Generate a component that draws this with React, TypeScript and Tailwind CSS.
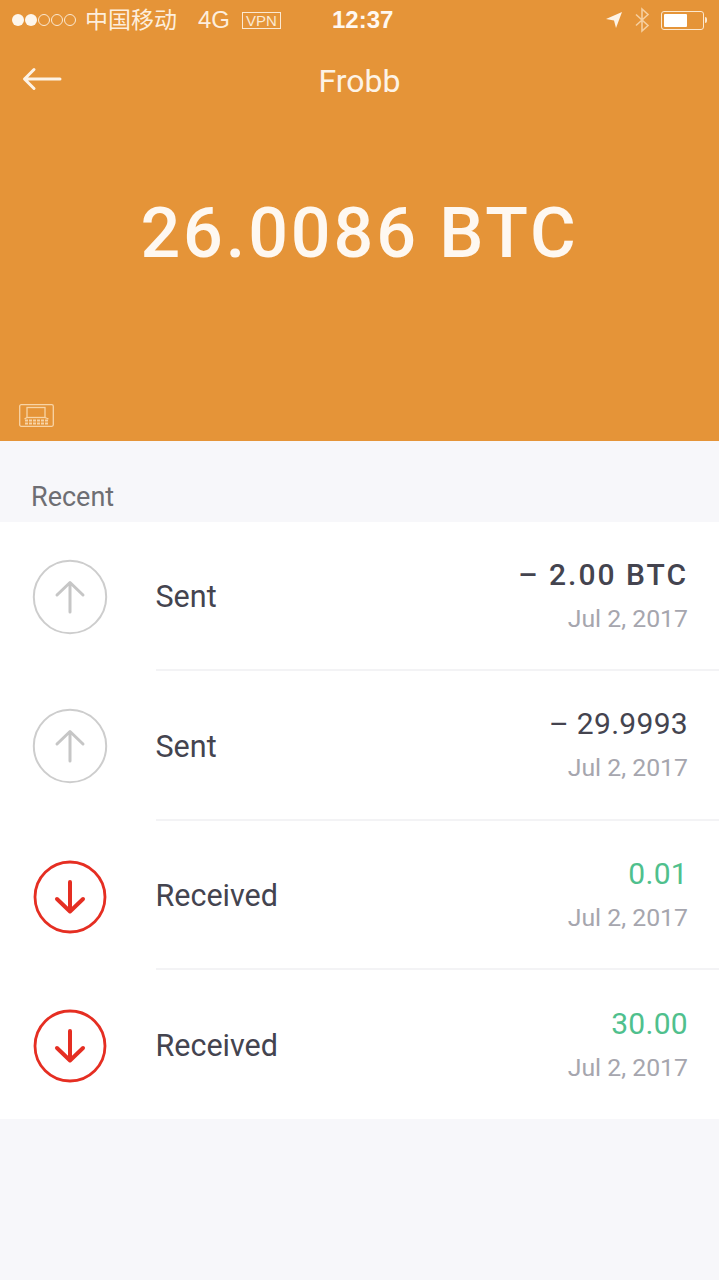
import React from "react";

const Roboto = "font-['Roboto',sans-serif]";

const StatusBar = () => (
  <div className="flex h-10 items-center pl-3 pr-[12px] text-white">
    <div className="flex w-[66px] items-center gap-[1px]">
      <span className="h-[12px] w-[12px] rounded-full bg-[#fdf6ec]" />
      <span className="h-[12px] w-[12px] rounded-full bg-[#fdf6ec]" />
      <span className="h-[12px] w-[12px] rounded-full border border-[#fbe9d2]" />
      <span className="h-[12px] w-[12px] rounded-full border border-[#fbe9d2]" />
      <span className="h-[12px] w-[12px] rounded-full border border-[#fbe9d2]" />
    </div>
    <span className="ml-[7px] -mt-[3px] w-[93px] font-['Noto_Sans_CJK_SC',sans-serif] text-[23px] leading-none text-[#fdeedd]">
      中国移动
    </span>
    <span className="ml-[20px] font-['Liberation_Sans',sans-serif] text-[24px] leading-none text-[#fdeedd]">
      4G
    </span>
    <span className="ml-[12px] flex h-[17px] w-[39px] items-center justify-center border border-[#fbe9d2] font-['Liberation_Sans',sans-serif] text-[15px] leading-none text-[#fbe9d2]">
      VPN
    </span>
    <span className="ml-[51px] font-['Liberation_Sans',sans-serif] text-[24px] font-bold leading-none text-[#fff8f0]">
      12:37
    </span>
    <div className="ml-auto flex items-center gap-[11px]">
      <svg width="18" height="18" viewBox="0 0 18 18">
        <path d="M17 1 L1 8 L9 9.5 L11 17 Z" fill="#fdf3e6" />
      </svg>
      <svg width="16" height="26" viewBox="0 0 16 26" fill="none" stroke="#f6cf9f" strokeWidth="1.6">
        <path d="M2 7.5 L14 18.5 L8 24 V2 L14 7.5 L2 18.5" />
      </svg>
      <div className="flex items-center gap-[1px]">
        <div className="h-[19px] w-[43px] rounded-[3px] border border-[#fce8cf] p-[2px]">
          <div className="h-full w-[23px] rounded-[1px] bg-white" />
        </div>
        <div className="h-[6px] w-[2px] rounded-r-full bg-[#fce8cf]" />
      </div>
    </div>
  </div>
);

const Header = () => (
  <div className="flex h-[441px] shrink-0 flex-col bg-[#e59438]">
    <StatusBar />
    <div className="relative flex h-[82px] items-center justify-center">
      <svg className="absolute left-[22px] top-[26px]" width="40" height="26" viewBox="0 0 40 26" fill="none" stroke="#fdf3e6" strokeWidth="3" strokeLinecap="round" strokeLinejoin="round">
        <path d="M38 13 H3 M12 3.5 L2.5 13 L12 22.5" />
      </svg>
      <span className={`${Roboto} text-[32px] leading-none text-[#fdf3e6]`}>Frobb</span>
    </div>
    <div className={`${Roboto} mt-[76px] text-center text-[70px] font-medium leading-none tracking-[2.9px] text-[#fef8f1]`}>
      26.0086 BTC
    </div>
    <div className="mt-auto mb-[14px] ml-[19px]">
      <svg width="35" height="23" viewBox="0 0 35 23" fill="none" stroke="#f8d4a6" strokeWidth="1.3">
        <rect x="0.7" y="0.7" width="33.6" height="21.6" rx="1.5" />
        <rect x="8" y="3.5" width="18" height="10" />
        <path d="M8 13.5 L5.5 15 M26 13.5 L29.5 15" />
        <path d="M6 16.5 H30 M6 19.5 H30" strokeDasharray="3 1" strokeWidth="2" />
      </svg>
    </div>
  </div>
);

const UpIcon = () => (
  <svg width="76" height="76" viewBox="0 0 76 76" fill="none" stroke="#cdcdcd" strokeLinecap="round" strokeLinejoin="round">
    <circle cx="38" cy="38" r="36.2" strokeWidth="2" />
    <path d="M38 53 V24 M25 36 L38 23.5 L51 36" strokeWidth="3" stroke="#c6c6c6" />
  </svg>
);

const DownIcon = () => (
  <svg width="76" height="76" viewBox="0 0 76 76" fill="none" stroke="#e52e22" strokeLinecap="round" strokeLinejoin="round">
    <circle cx="38" cy="38" r="35" strokeWidth="2.8" />
    <path d="M38 23 V52 M25 40 L38 52.5 L51 40" strokeWidth="4" />
  </svg>
);

type Tx = {
  label: string;
  amount: string;
  amountClass: string;
  down: boolean;
};

const txs: Tx[] = [
  { label: "Sent", amount: "– 2.00 BTC", amountClass: "text-[#44444f] font-medium tracking-[2px]", down: false },
  { label: "Sent", amount: "– 29.9993", amountClass: "text-[#44444f] tracking-[0.3px]", down: false },
  { label: "Received", amount: "0.01", amountClass: "text-[#4fc08d] tracking-[0.3px]", down: true },
  { label: "Received", amount: "30.00", amountClass: "text-[#4fc08d] tracking-[0.3px]", down: true },
];

const Row = ({ tx, last }: { tx: Tx; last: boolean }) => (
  <div className={`${Roboto} flex h-[149.25px] items-center pl-8`}>
    <div className={`w-[123.5px] shrink-0 ${tx.down ? "pt-[3px]" : ""}`}>{tx.down ? <DownIcon /> : <UpIcon />}</div>
    <div className={`flex h-full flex-1 items-center justify-between pr-[31px] ${last ? "" : "border-b-2 border-[#f3f3f5]"}`}>
      <span className="pt-[4px] text-[30.5px] leading-none text-[#44444f]">{tx.label}</span>
      <div className="flex flex-col items-end gap-[17px] pt-[1px]">
        <span className={`text-[30px] leading-none ${tx.amountClass}`}>{tx.amount}</span>
        <span className="text-[24.8px] leading-none text-[#a6a6ae]">Jul 2, 2017</span>
      </div>
    </div>
  </div>
);

export default function App() {
  return (
    <div className="flex h-[1280px] w-[719px] flex-col overflow-hidden bg-[#f7f7fa]">
      <Header />
      <div className={`${Roboto} flex h-[81px] shrink-0 items-end pb-[11px] pl-[31px] text-[27px] leading-none text-[#6e6e73]`}>
        Recent
      </div>
      <div className="bg-white">
        {txs.map((tx, i) => (
          <Row key={i} tx={tx} last={i === txs.length - 1} />
        ))}
      </div>
    </div>
  );
}
